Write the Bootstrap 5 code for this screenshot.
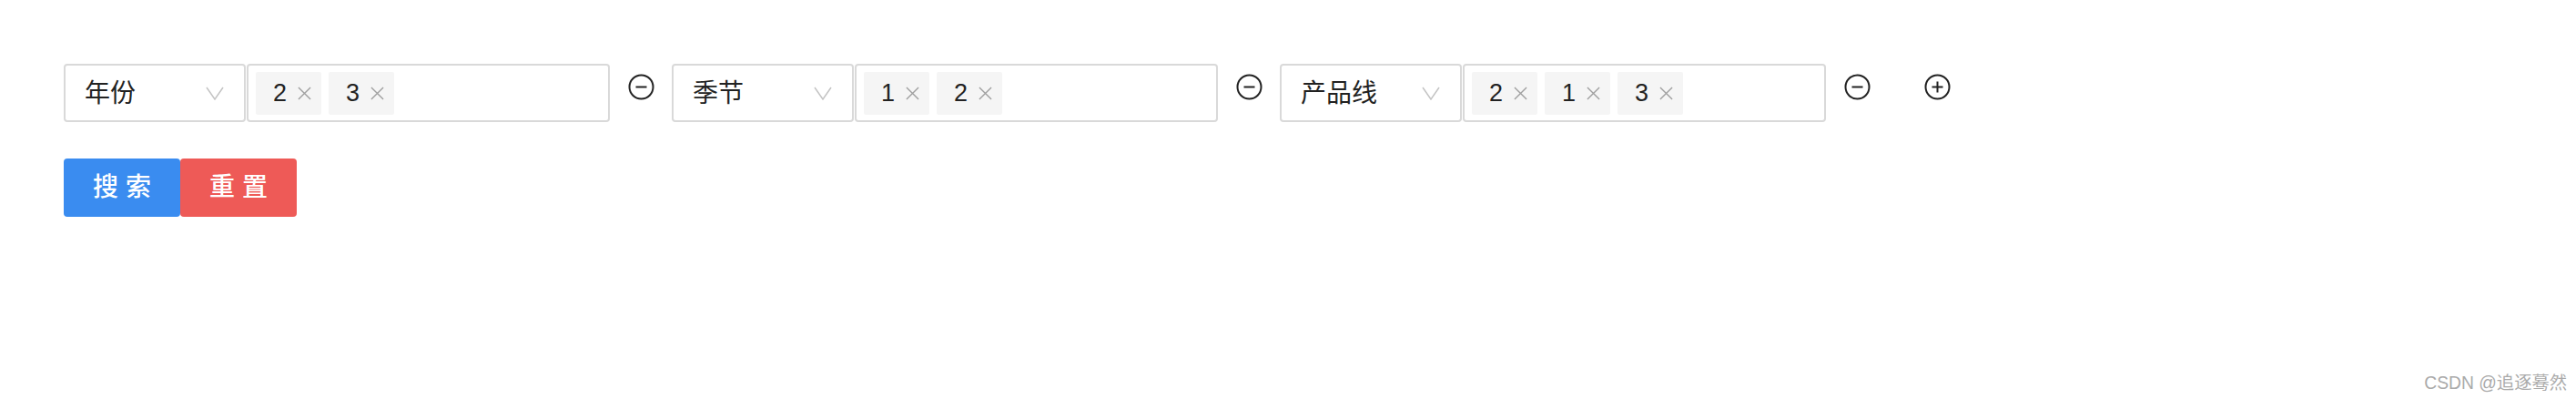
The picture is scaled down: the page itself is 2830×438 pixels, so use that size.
<!DOCTYPE html>
<html lang="zh">
<head>
<meta charset="utf-8">
<title>搜索</title>
<link href="https://cdn.jsdelivr.net/npm/bootstrap@5.3.0/dist/css/bootstrap.min.css" rel="stylesheet">
<style>
html,body{height:100%;margin:0;background:#fff;overflow:hidden}
body{font-family:"Liberation Sans","Noto Sans CJK SC",sans-serif;color:#222}
.stage{height:438px;padding:70px 0 0 70px}
.group-box{height:64px;border:2px solid #d9d9d9;border-radius:4px;background:#fff}
.pick-box{width:200px;padding:2px 22px 0 21px;font-size:28px;margin-right:1px}
.chev{margin-top:-2px;width:20px;height:15px;color:#c4c4c4}
.value-box{width:399px;padding:0 8px;gap:8px}
.chip{height:47px;padding:0 11px 0 19px;background:#f5f5f5;font-size:27px;gap:12px;border-radius:2px}
.chip svg{width:15px;height:15px;color:#a0a0a0}
.rnd{width:68px;height:64px;padding-bottom:14px}
.rnd svg{width:29px;height:29px;color:#222}
.add-slot{margin-left:20px}
.act{width:128px;height:64px;border:0;border-radius:4px;font-size:28px;font-weight:500;letter-spacing:8px;color:#fff;padding:0 0 0 8px;line-height:1}
.act-blue{background:#3a8cf0}
.act-red{background:#ee5a57}
.act-row{margin-top:40px}
.mark-text{position:absolute;right:10px;bottom:6px;font-size:19.3px;color:#aaa;line-height:1.2}
</style>
</head>
<body>
<div class="stage">
  <div class="d-flex align-items-start">
    <div class="group-box pick-box d-flex align-items-center justify-content-between"><span>年份</span><svg class="chev" viewBox="0 0 20 15" fill="none" stroke="currentColor" stroke-width="1.5"><path d="M1 1l9 13 9-13"/></svg></div>
    <div class="group-box value-box d-flex align-items-center">
      <span class="chip d-flex align-items-center">2<svg viewBox="0 0 16 16" fill="none" stroke="currentColor" stroke-width="1.5"><path d="M1 1l14 14M15 1L1 15"/></svg></span>
      <span class="chip d-flex align-items-center">3<svg viewBox="0 0 16 16" fill="none" stroke="currentColor" stroke-width="1.5"><path d="M1 1l14 14M15 1L1 15"/></svg></span>
    </div>
    <div class="rnd d-flex align-items-center justify-content-center"><svg viewBox="0 0 29 29" fill="none" stroke="currentColor" stroke-width="2"><circle cx="14.5" cy="14.5" r="13"/><path d="M8.5 14.5h12"/></svg></div>

    <div class="group-box pick-box d-flex align-items-center justify-content-between"><span>季节</span><svg class="chev" viewBox="0 0 20 15" fill="none" stroke="currentColor" stroke-width="1.5"><path d="M1 1l9 13 9-13"/></svg></div>
    <div class="group-box value-box d-flex align-items-center">
      <span class="chip d-flex align-items-center">1<svg viewBox="0 0 16 16" fill="none" stroke="currentColor" stroke-width="1.5"><path d="M1 1l14 14M15 1L1 15"/></svg></span>
      <span class="chip d-flex align-items-center">2<svg viewBox="0 0 16 16" fill="none" stroke="currentColor" stroke-width="1.5"><path d="M1 1l14 14M15 1L1 15"/></svg></span>
    </div>
    <div class="rnd d-flex align-items-center justify-content-center"><svg viewBox="0 0 29 29" fill="none" stroke="currentColor" stroke-width="2"><circle cx="14.5" cy="14.5" r="13"/><path d="M8.5 14.5h12"/></svg></div>

    <div class="group-box pick-box d-flex align-items-center justify-content-between"><span>产品线</span><svg class="chev" viewBox="0 0 20 15" fill="none" stroke="currentColor" stroke-width="1.5"><path d="M1 1l9 13 9-13"/></svg></div>
    <div class="group-box value-box d-flex align-items-center">
      <span class="chip d-flex align-items-center">2<svg viewBox="0 0 16 16" fill="none" stroke="currentColor" stroke-width="1.5"><path d="M1 1l14 14M15 1L1 15"/></svg></span>
      <span class="chip d-flex align-items-center">1<svg viewBox="0 0 16 16" fill="none" stroke="currentColor" stroke-width="1.5"><path d="M1 1l14 14M15 1L1 15"/></svg></span>
      <span class="chip d-flex align-items-center">3<svg viewBox="0 0 16 16" fill="none" stroke="currentColor" stroke-width="1.5"><path d="M1 1l14 14M15 1L1 15"/></svg></span>
    </div>
    <div class="rnd d-flex align-items-center justify-content-center"><svg viewBox="0 0 29 29" fill="none" stroke="currentColor" stroke-width="2"><circle cx="14.5" cy="14.5" r="13"/><path d="M8.5 14.5h12"/></svg></div>
    <div class="rnd add-slot d-flex align-items-center justify-content-center"><svg viewBox="0 0 29 29" fill="none" stroke="currentColor" stroke-width="2"><circle cx="14.5" cy="14.5" r="13"/><path d="M8.5 14.5h12M14.5 8.5v12"/></svg></div>
  </div>
  <div class="d-flex act-row">
    <button type="button" class="btn act act-blue">搜索</button>
    <button type="button" class="btn act act-red">重置</button>
  </div>
</div>
<div class="mark-text">CSDN @追逐蓦然</div>
</body>
</html>
